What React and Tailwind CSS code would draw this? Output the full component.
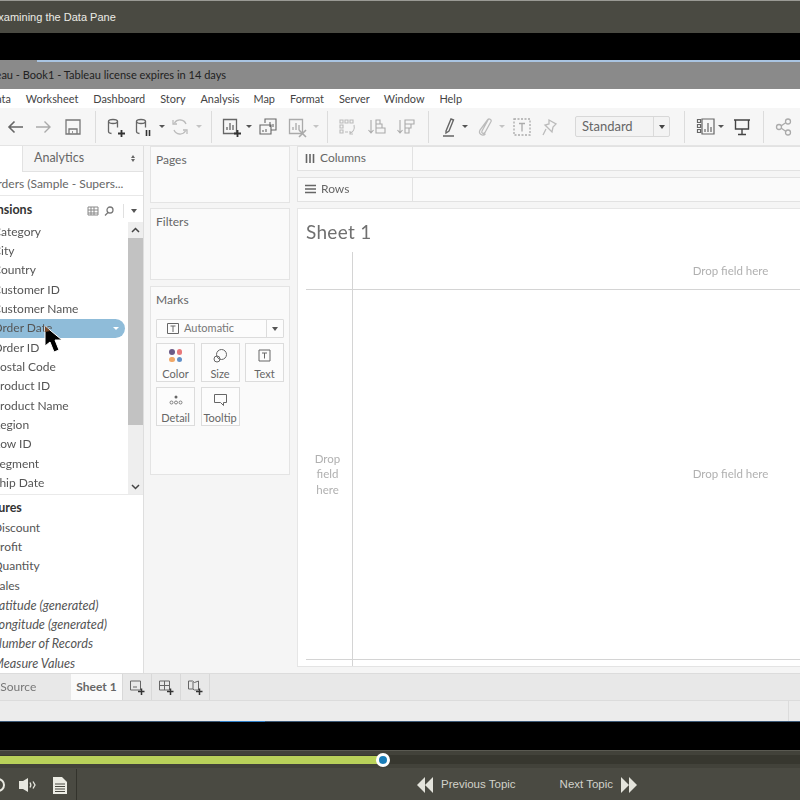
const sans = "font-['Lato','Noto_Sans',sans-serif]";

const menus = [
  ['Data', 'ml-[-12px]'], ['Worksheet', 'ml-[15px]'], ['Dashboard', 'ml-[15px]'], ['Story', 'ml-[15px]'], ['Analysis', 'ml-[15px]'],
  ['Map', 'ml-[14px]'], ['Format', 'ml-[15px]'], ['Server', 'ml-[15px]'], ['Window', 'ml-[14px]'], ['Help', 'ml-[15px]'],
];
const dimensions = ['Category', 'City', 'Country', 'Customer ID', 'Customer Name', 'Order Date', 'Order ID', 'Postal Code', 'Product ID', 'Product Name', 'Region', 'Row ID', 'Segment', 'Ship Date'];
const measures = ['Discount', 'Profit', 'Quantity', 'Sales'];
const generated = ['Latitude (generated)', 'Longitude (generated)', 'Number of Records', 'Measure Values'];

function Ico({ w = 22, h = 22, children, className = '' }) {
  return (
    <svg width={w} height={h} viewBox={`0 0 ${w} ${h}`} fill="none" stroke="currentColor" strokeWidth="1.3" className={`shrink-0 ${className}`}>
      {children}
    </svg>
  );
}

function Slot({ w, children }) {
  return <div style={{ width: w }} className="flex shrink-0 items-center justify-center">{children}</div>;
}

function Caret({ w = 8, light }) {
  return (
    <Slot w={w}>
      <div className={`h-0 w-0 border-x-[3px] border-t-[3px] border-x-transparent ${light ? 'border-t-[#c4c4c4]' : 'border-t-[#555]'}`}></div>
    </Slot>
  );
}

function Sep({ w = 14 }) {
  return <Slot w={w}><div className="h-[32px] w-px bg-[#dcdcdc]"></div></Slot>;
}

function Plus() {
  return <path d="M14 17.5h7M17.5 14v7" stroke="#333" strokeWidth="1.8" />;
}

function Toolbar() {
  return (
    <div className="flex h-[37px] shrink-0 items-center bg-[#f6f6f6] text-[#666]">
      <Slot w={30}><Ico><path d="M19 11H5M10.5 5.5 5 11l5.5 5.5" strokeWidth="1.6" /></Ico></Slot>
      <Slot w={28}><Ico className="text-[#aaa]"><path d="M3 11h14M11.5 5.5 17 11l-5.5 5.5" strokeWidth="1.4" /></Ico></Slot>
      <Slot w={30}><Ico className="text-[#777]"><path d="M4 4h14v14H4zM7 18v-5h8v5M10 16h1" /></Ico></Slot>
      <Sep />
      <Slot w={26}><Ico><ellipse cx="9" cy="5.5" rx="4.5" ry="2" /><path d="M4.5 5.5v10c0 1 1 1.8 3 2M13.5 5.5v6" /><Plus /></Ico></Slot>
      <Slot w={30}><Ico><ellipse cx="9" cy="5.5" rx="4.5" ry="2" /><path d="M4.5 5.5v10c0 1 1 1.8 3 2M13.5 5.5v6" /><path d="M14.5 14v6M17.5 14v6" stroke="#333" strokeWidth="1.6" /></Ico></Slot>
      <Caret />
      <Slot w={28}><Ico className="text-[#bbb]"><path d="M17 8a6.5 6.5 0 0 0-11.5-1M5 14a6.5 6.5 0 0 0 11.5 1M4 4v4h4M18 18v-4h-4" /></Ico></Slot>
      <Caret w={10} light />
      <Sep w={14} />
      <Slot w={26}><Ico><path d="M3.5 3.5h13v14h-13zM7 14v-3M10 14V7M13 14v-5" /><Plus /></Ico></Slot>
      <Caret w={10} />
      <Slot w={28}><Ico><path d="M8 7V3h11v11h-5M3 9h11v9H3zM6 16v-2M9 16v-3M13 11V6M16 11V8" strokeWidth="1.1" /></Ico></Slot>
      <Slot w={30}><Ico className="text-[#aaa]"><path d="M3.5 3.5h13v14h-13zM7 14v-3M10 14V7M13 14v-5" /><path d="m13 14 7 7M20 14l-7 7" strokeWidth="1.6" /></Ico></Slot>
      <Caret light />
      <Sep w={14} />
      <Slot w={26}><Ico className="text-[#bbb]"><path d="M4 4h3v3H4zM9 4h3v3H9zM14 4h3v3h-3zM4 9h3v3H4zM4 14h3v3H4zM9 16h3M18 9c1 4-1 7-4 8M14 15l0 3 3 0" strokeWidth="1.1" /></Ico></Slot>
      <Slot w={34}><Ico className="text-[#aaa]"><path d="M5 4v13M2.5 14 5 17l2.5-3M10 4h4v4h-4zM10 8h6v4h-6zM10 12h9v5h-9z" strokeWidth="1.1" /></Ico></Slot>
      <Slot w={24}><Ico className="text-[#aaa]"><path d="M5 4v13M2.5 14 5 17l2.5-3M10 4h9v4h-9zM10 8h6v4h-6zM10 12h4v5h-4z" strokeWidth="1.1" /></Ico></Slot>
      <Sep w={20} />
      <Slot w={22}><Ico><path d="M8 15 13 3l2.5 1L11 15l-3 2zM5 20h11" strokeWidth="1.4" /></Ico></Slot>
      <Caret w={10} />
      <Slot w={28}><Ico className="text-[#bbb]"><path d="M15 4 9 15c-1 2 1.5 3.5 3 1.5l6-11c1-2-2-3.5-3.5-1.5L7 14c-2 4 3 7 5.5 3.5" /></Ico></Slot>
      <Caret light />
      <Slot w={32}><Ico className="text-[#aaa]"><path d="M3 3h16v16H3z" strokeDasharray="2 1.5" /><path d="M8 7.5h6M11 7.5v8" /></Ico></Slot>
      <Slot w={24}><Ico className="text-[#bbb]"><path d="M10 4l7 4-3 3-1 5-7-7 4-1zM7 13l-3 6" /></Ico></Slot>
      <div className="ml-[13px] flex h-[21px] w-[95px] shrink-0 items-center rounded-[2px] border border-[#d8d8d8] bg-[#f3f3f3]">
        <span className={`${sans} flex-1 pl-[6px] text-[13px] text-[#666]`}>Standard</span>
        <div className="flex h-full w-[16px] items-center justify-center border-l border-[#dadada]">
          <div className="h-0 w-0 border-x-[3.5px] border-t-[4px] border-x-transparent border-t-[#444]"></div>
        </div>
      </div>
      <Sep w={28} />
      <Slot w={18}><Ico><path d="M1.5 3.5h3v3h-3zM1.5 8.5h3v3h-3zM1.5 13.5h3v3h-3zM6 3h12v15H6zM9 16v-3M12 16V7M15 16v-5" strokeWidth="1.2" /></Ico></Slot>
      <Caret w={10} />
      <Slot w={32}><Ico className="text-[#444]"><path d="M3 4h16M4.5 4v9h13V4M11 13v5M7 18.5h8" strokeWidth="1.4" /></Ico></Slot>
      <Sep w={10} />
      <Slot w={32}><Ico className="text-[#aaa]"><circle cx="6" cy="11" r="2.5" /><circle cx="15" cy="5.5" r="2.5" /><circle cx="15" cy="16.5" r="2.5" /><path d="m8 10 5-3.5M8 12l5 3.5" /></Ico></Slot>
    </div>
  );
}

function FieldRow({ name, italic }) {
  return (
    <div className={`${sans} flex h-[19.35px] shrink-0 items-center whitespace-nowrap leading-none text-[#555] ${italic ? 'text-[12.7px] italic' : 'text-[12px]'}`}>
      <span className="ml-[-7px]">{name}</span>
    </div>
  );
}

function DataPane() {
  return (
    <div className="flex w-[144px] shrink-0 flex-col overflow-hidden border-r border-[#dedede] bg-white">
      <div className="flex h-[26px] shrink-0">
        <div className="w-[22px] bg-white"></div>
        <div className={`${sans} flex flex-1 items-center justify-between border-b border-l border-[#e2e2e2] bg-[#f6f6f6] pl-[11px] pr-[8px] text-[12.5px] text-[#666]`}>
          <span>Analytics</span>
          <span className="flex flex-col gap-[1px]">
            <span className="h-0 w-0 border-x-[2.5px] border-b-[3px] border-x-transparent border-b-[#666]"></span>
            <span className="h-0 w-0 border-x-[2.5px] border-t-[3px] border-x-transparent border-t-[#666]"></span>
          </span>
        </div>
      </div>
      <div className={`${sans} flex h-[24px] shrink-0 items-center overflow-hidden whitespace-nowrap border-b border-[#e8e8e8] text-[12px] text-[#666]`}>
        <span className="ml-[-12px]">Orders (Sample - Supers...</span>
      </div>
      <div className="flex h-[26px] shrink-0 items-center pt-[3px]">
        <span className={`${sans} ml-[-33px] text-[12.5px] font-bold text-[#333]`}>Dimensions</span>
        <div className="ml-auto flex items-center">
          <Ico w={14} h={12} className="text-[#888]"><path d="M2 2h10v8H2zM5 2v8M8 2v8M2 5h10M2 8h10" strokeWidth="1" /></Ico>
          <Ico w={18} h={12} className="text-[#777]"><circle cx="10" cy="5" r="3" /><path d="m8 7.5-3 3" /></Ico>
          <div className="mx-[5px] h-[14px] w-px bg-[#e0e0e0]"></div>
          <div className="ml-[2px] mr-[6px] h-0 w-0 border-x-[3.5px] border-t-[4px] border-x-transparent border-t-[#555]"></div>
        </div>
      </div>
      <div className="flex h-[273px] shrink-0 border-b border-[#eaeaea]">
        <div className="relative min-w-0 flex-1">
          {dimensions.map((d) => (
            <div key={d} className="relative">
              {d === 'Order Date' && (
                <div className="absolute inset-y-0 left-[-10px] right-[3px] flex items-center justify-end rounded-r-full bg-[#8fbcd9] pr-[6px]">
                  <div className="h-0 w-0 border-x-[3.5px] border-t-[3.5px] border-x-transparent border-t-white"></div>
                </div>
              )}
              <div className="relative"><FieldRow name={d} /></div>
            </div>
          ))}
        </div>
        <div className="flex w-[15px] shrink-0 flex-col bg-[#eeeeee]">
          <div className="flex h-[16px] items-center justify-center text-[#444]">
            <Ico w={9} h={6}><path d="m1 5 3.5-3.5L8 5" strokeWidth="1.5" /></Ico>
          </div>
          <div className="h-[187px] bg-[#c2c2c2]"></div>
          <div className="mt-auto flex h-[15px] items-center justify-center text-[#444]">
            <Ico w={9} h={6}><path d="m1 1 3.5 3.5L8 1" strokeWidth="1.5" /></Ico>
          </div>
        </div>
      </div>
      <div className="flex h-[23px] shrink-0 items-center pt-[3px]">
        <span className={`${sans} ml-[-32px] text-[12.5px] font-bold text-[#333]`}>Measures</span>
      </div>
      {measures.map((m) => <FieldRow key={m} name={m} />)}
      {generated.map((m) => <FieldRow key={m} name={m} italic />)}
    </div>
  );
}

function Card({ title, className = '', children }) {
  return (
    <div className={`border border-[#e4e4e4] bg-[#fafafa] px-[5px] ${className}`}>
      <div className={`${sans} pt-[5px] text-[12px] leading-[16px] text-[#666]`}>{title}</div>
      {children}
    </div>
  );
}

function MarkBtn({ icon, label }) {
  return (
    <div className="flex h-[39px] w-[39px] flex-col items-center border border-[#dcdcdc] bg-[#fcfcfc] pt-[4px]">
      <div className="flex h-[15px] items-center text-[#666]">{icon}</div>
      <span className={`${sans} mt-[4px] text-[11px] leading-[13px] text-[#666]`}>{label}</span>
    </div>
  );
}

function ShelfCards() {
  return (
    <div className="flex w-[153px] shrink-0 flex-col bg-[#f5f5f5] pl-[6px] pr-[7px]">
      <Card title="Pages" className="h-[57px]" />
      <Card title="Filters" className="mt-[5px] h-[72px]" />
      <Card title="Marks" className="mt-[6px] h-[189px]">
        <div className="mt-[11px] flex h-[19px] items-center rounded-[1px] border border-[#dcdcdc] bg-[#fcfcfc]">
          <Ico w={14} h={13} className="ml-[9px] text-[#666]"><path d="M1.5 1.5h11v10h-11zM4.5 4h5M7 4v6" strokeWidth="1" /></Ico>
          <span className={`${sans} ml-[4px] flex-1 text-[11px] text-[#777]`}>Automatic</span>
          <div className="flex h-full w-[17px] items-center justify-center border-l border-[#dcdcdc]">
            <div className="h-0 w-0 border-x-[3px] border-t-[4px] border-x-transparent border-t-[#555]"></div>
          </div>
        </div>
        <div className="mt-[5px] grid grid-cols-[39px_39px_39px] gap-x-[5.5px] gap-y-[5px]">
          <MarkBtn label="Color" icon={
            <div className="grid grid-cols-2 gap-[2px]">
              <span className="h-[5.5px] w-[5.5px] rounded-full bg-[#6b5a86]"></span>
              <span className="h-[5.5px] w-[5.5px] rounded-full bg-[#e8787a]"></span>
              <span className="h-[5.5px] w-[5.5px] rounded-full bg-[#f0a868]"></span>
              <span className="h-[5.5px] w-[5.5px] rounded-full bg-[#5f8fc8]"></span>
            </div>
          } />
          <MarkBtn label="Size" icon={<Ico w={15} h={15}><circle cx="8.5" cy="6.5" r="5" strokeWidth="1" /><circle cx="4" cy="11" r="3" strokeWidth="1" /></Ico>} />
          <MarkBtn label="Text" icon={<Ico w={13} h={13}><path d="M1 1h11v11H1zM4 4h5M6.5 4v5.5" strokeWidth="1" /></Ico>} />
          <MarkBtn label="Detail" icon={
            <Ico w={14} h={13}><circle cx="7" cy="4" r="1.5" fill="currentColor" stroke="none" /><circle cx="2.5" cy="9.5" r="1.5" strokeWidth=".8" /><circle cx="7" cy="9.5" r="1.5" strokeWidth=".8" /><circle cx="11.5" cy="9.5" r="1.5" strokeWidth=".8" /></Ico>
          } />
          <MarkBtn label="Tooltip" icon={<Ico w={15} h={14}><path d="M1.5 1.5h12v8h-3v3l-3-3h-6z" strokeWidth="1" /></Ico>} />
        </div>
      </Card>
    </div>
  );
}

function Shelf({ icon, label, className = '' }) {
  return (
    <div className={`flex h-[25px] border-y border-[#e2e2e2] bg-[#fafafa] ${className}`}>
      <div className="flex w-[116px] shrink-0 items-center border-x border-[#e2e2e2] pl-[7px] text-[#666]">
        {icon}
        <span className={`${sans} ml-[5px] text-[12px]`}>{label}</span>
      </div>
    </div>
  );
}

function DropHint({ children, className = '' }) {
  return <div className={`${sans} text-[11.5px] leading-[15.5px] text-[#b0b0b0] ${className}`}>{children}</div>;
}

function Workspace() {
  return (
    <div className="flex min-w-0 flex-1 flex-col bg-[#f5f5f5]">
      <Shelf label="Columns" icon={<Ico w={10} h={11}><path d="M1.5 1v9M5 1v9M8.5 1v9" strokeWidth="1.6" /></Ico>} />
      <Shelf label="Rows" className="mt-[6px]" icon={<Ico w={11} h={10}><path d="M0 1.5h11M0 5h11M0 8.5h11" strokeWidth="1.5" /></Ico>} />
      <div className="mt-[6px] flex h-[459px] flex-col border-l border-t border-[#e6e6e6] bg-white pl-[8px]">
        <div className={`${sans} h-[43px] pt-[10px] text-[19px] leading-[26px] tracking-[0.3px] text-[#707070]`}>Sheet 1</div>
        <div className="grid min-h-0 flex-1 grid-cols-[47px_1fr] grid-rows-[38px_1fr_7px]">
          <div className="border-b border-r border-[#d4d4d4]"></div>
          <div className="flex items-center justify-center border-b border-[#d4d4d4] pl-[308px] pt-[1px]"><DropHint>Drop field here</DropHint></div>
          <div className="flex items-center justify-center border-r border-[#d4d4d4] pb-[1px]">
            <DropHint className="pr-[3px] text-center">Drop<br />field<br />here</DropHint>
          </div>
          <div className="flex items-center justify-center pb-[1px] pl-[308px]"><DropHint>Drop field here</DropHint></div>
          <div className="border-r border-t border-[#d4d4d4]"></div>
          <div className="border-t border-[#d4d4d4]"></div>
        </div>
      </div>
      <div className="h-[7px] border-t border-[#e4e4e4]"></div>
    </div>
  );
}

function NewTab({ children }) {
  return <div className="flex w-[29px] items-center justify-center border-r border-[#d8d8d8] text-[#666]">{children}</div>;
}

function Tabs() {
  return (
    <div className="flex h-[28px] shrink-0 border-y border-[#dcdcdc] bg-[#e8e8e8]">
      <div className={`${sans} flex w-[71px] items-center overflow-hidden whitespace-nowrap text-[12px] text-[#777]`}>
        <span className="ml-[-28px]">Data Source</span>
      </div>
      <div className={`${sans} flex w-[51px] items-center justify-center bg-[#fafafa] text-[12px] font-bold text-[#666]`}>Sheet 1</div>
      <div className="w-[1px] bg-[#d8d8d8]"></div>
      <NewTab><Ico w={16} h={16}><path d="M1.5 2h10v9h-10zM4 8h4" strokeWidth="1" /><path d="M9 12.5h6.5M12.5 9.5V16" stroke="#333" strokeWidth="1.5" /></Ico></NewTab>
      <NewTab><Ico w={16} h={16}><path d="M1.5 2h10v9h-10zM1.5 6.5h10M6.5 2v9" strokeWidth="1" /><path d="M9 12.5h6.5M12.5 9.5V16" stroke="#333" strokeWidth="1.5" /></Ico></NewTab>
      <NewTab><Ico w={16} h={16}><path d="M1.5 2h4l2 1.5 4-1.5v9h-4l-2-1h-4zM6 3v7" strokeWidth="1" /><path d="M9 12.5h6.5M12.5 9.5V16" stroke="#333" strokeWidth="1.5" /></Ico></NewTab>
    </div>
  );
}

function Cursor() {
  return (
    <svg width="22" height="30" viewBox="0 0 22 30" className="absolute left-[42px] top-[265px]">
      <path d="M3 1 3 21 8 17 12 27 17 25 13 15 20 15Z" fill="#000" stroke="#fff" strokeWidth="1" />
      <path d="M3 1 3 7 8 6Z" fill="#7a4a2a" />
    </svg>
  );
}

function Player() {
  return (
    <div className="flex h-[50px] shrink-0 flex-col bg-[#4a4a42]">
      <div className="relative h-[18px] shrink-0 border-t border-[#5a5a52] bg-[#42423a]">
        <div className="absolute inset-x-0 top-[4px] h-[9px] bg-[#37372f]"></div>
        <div className="absolute left-0 top-[5px] h-[8px] w-[383px] bg-[#b9d15a]"></div>
        <div className="absolute left-[376px] top-[2px] h-[14px] w-[14px] rounded-full border-[3px] border-white bg-[#1a7db8]"></div>
      </div>
      <div className="flex flex-1 items-center pt-[1px]">
        <div className="ml-[-9px] h-[14px] w-[14px] rounded-full border-2 border-[#e8e8e0]"></div>
        <svg width="18" height="14" viewBox="0 0 18 14" className="ml-[14px] text-[#e8e8e0]">
          <path d="M0 3h4l5-3v14l-5-3H0z" fill="currentColor" />
          <path d="M11 4.5c1 1.5 1 3.5 0 5M14 3.5l2 3.5-2 3.5" fill="none" stroke="currentColor" strokeWidth="1.3" />
        </svg>
        <svg width="14" height="17" viewBox="0 0 14 17" className="ml-[16px]">
          <path d="M0 0h9l5 5v12H0z" fill="#ecece4" />
          <path d="M2 7h10M2 9.5h10M2 12h10M2 14.5h10" stroke="#4a4a42" strokeWidth="1" />
        </svg>
        <div className="ml-[9px] h-[32px] w-px bg-[#33332c]"></div>
        <svg width="16" height="16" viewBox="0 0 16 16" className="ml-[340px] text-[#e4e4dc]">
          <path d="M8 0v16L0 8zM16 0v16L8 8z" fill="currentColor" />
        </svg>
        <span className="ml-[8px] font-['Liberation_Sans',sans-serif] text-[11.5px] text-[#d2d2ca]">Previous Topic</span>
        <span className="ml-[44px] font-['Liberation_Sans',sans-serif] text-[11.5px] text-[#d2d2ca]">Next Topic</span>
        <svg width="16" height="16" viewBox="0 0 16 16" className="ml-[8px] text-[#e4e4dc]">
          <path d="M0 0v16l8-8zM8 0v16l8-8z" fill="currentColor" />
        </svg>
      </div>
    </div>
  );
}

export default function App() {
  return (
    <div className="flex h-[800px] w-[800px] flex-col overflow-hidden bg-black">
      <div className="flex h-[33px] shrink-0 items-center overflow-hidden border-t border-[#9a9a94] bg-[#4a4a42]">
        <span className="ml-[-9px] font-['Liberation_Sans',sans-serif] text-[11px] text-[#ecece6]">Examining the Data Pane</span>
      </div>
      <div className="h-[27px] shrink-0 bg-black"></div>

      <div className="relative flex h-[662px] shrink-0 flex-col overflow-hidden blur-[0.35px]">
        <div className="flex h-[2px] shrink-0 bg-[#a9c4e2]">
          <div className="w-[37px] bg-[#8a8a8a]"></div>
        </div>
        <div className="flex h-[27px] shrink-0 items-center overflow-hidden whitespace-nowrap bg-[#8a8a8a]">
          <span className={`${sans} ml-[-24px] text-[11.05px] text-[#222]`}>Tableau - Book1 - Tableau license expires in 14 days</span>
        </div>
        <div className={`${sans} flex h-[19px] shrink-0 items-center whitespace-nowrap bg-white pt-[1px] text-[10.9px] text-[#444]`}>
          {menus.map(([m, cls]) => <span key={m} className={cls}>{m}</span>)}
        </div>
        <Toolbar />
        <div className="flex min-h-0 flex-1 border-t border-[#e4e4e4]">
          <DataPane />
          <ShelfCards />
          <Workspace />
        </div>
        <Tabs />
        <div className="flex h-[20px] shrink-0 justify-end bg-[#ececec]">
          <div className="w-[12px] border-l border-[#dcdcdc]"></div>
        </div>
        <div className="flex h-[1px] shrink-0 bg-[#3d5a78]">
          <div className="ml-[220px] w-[45px] bg-[#2f7fc8]"></div>
        </div>
        <Cursor />
      </div>

      <div className="min-h-0 flex-1 bg-black"></div>
      <Player />
    </div>
  );
}
